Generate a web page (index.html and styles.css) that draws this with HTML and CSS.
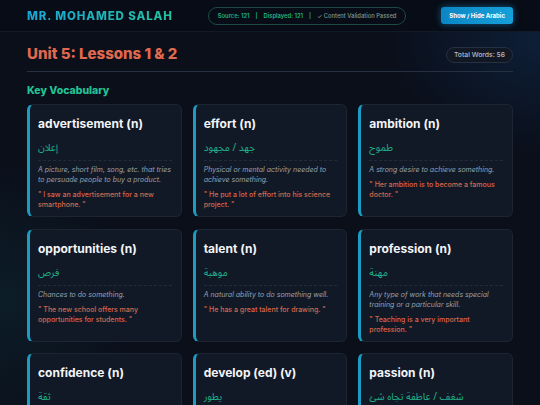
FILE: index.html
```html
<!DOCTYPE html>
<html lang="en">
<head>
<meta charset="utf-8">
<title>Unit 5 Vocabulary</title>
<link rel="stylesheet" href="styles.css">
</head>
<body>
<header class="topbar">
  <div class="brand">MR. MOHAMED SALAH</div>
  <div class="status">
    <span class="st-num">Source: 121</span>
    <span class="st-sep">|</span>
    <span class="st-num">Displayed: 121</span>
    <span class="st-sep">|</span>
    <span class="st-ok">✓ Content Validation Passed</span>
  </div>
  <button class="toggle">Show / Hide Arabic</button>
</header>
<main class="page">
  <div class="unit-head">
    <h1 class="unit-title">Unit 5: Lessons 1 &amp; 2</h1>
    <span class="count">Total Words: 56</span>
  </div>
  <h2 class="section">Key Vocabulary</h2>
  <div class="grid">
    <article class="card">
      <h3 class="word">advertisement (n)</h3>
      <p class="ar" dir="rtl">إعلان</p>
      <p class="def">A picture, short film, song, etc. that tries to persuade people to buy a product.</p>
      <p class="ex">" I saw an advertisement for a new smartphone. "</p>
    </article>
    <article class="card">
      <h3 class="word">effort (n)</h3>
      <p class="ar" dir="rtl">جهد / مجهود</p>
      <p class="def">Physical or mental activity needed to achieve something.</p>
      <p class="ex">" He put a lot of effort into his science project. "</p>
    </article>
    <article class="card">
      <h3 class="word">ambition (n)</h3>
      <p class="ar" dir="rtl">طموح</p>
      <p class="def">A strong desire to achieve something.</p>
      <p class="ex">" Her ambition is to become a famous doctor. "</p>
    </article>
    <article class="card">
      <h3 class="word">opportunities (n)</h3>
      <p class="ar" dir="rtl">فرص</p>
      <p class="def">Chances to do something.</p>
      <p class="ex">" The new school offers many opportunities for students. "</p>
    </article>
    <article class="card">
      <h3 class="word">talent (n)</h3>
      <p class="ar" dir="rtl">موهبة</p>
      <p class="def">A natural ability to do something well.</p>
      <p class="ex">" He has a great talent for drawing. "</p>
    </article>
    <article class="card">
      <h3 class="word">profession (n)</h3>
      <p class="ar" dir="rtl">مهنة</p>
      <p class="def">Any type of work that needs special training or a particular skill.</p>
      <p class="ex">" Teaching is a very important profession. "</p>
    </article>
    <article class="card">
      <h3 class="word">confidence (n)</h3>
      <p class="ar" dir="rtl">ثقة</p>
      <p class="def">The feeling that you can do things well.</p>
      <p class="ex">" She spoke with confidence. "</p>
    </article>
    <article class="card">
      <h3 class="word">develop (ed) (v)</h3>
      <p class="ar" dir="rtl">يطور</p>
      <p class="def">To grow or change into something bigger or better.</p>
      <p class="ex">" He developed his skills. "</p>
    </article>
    <article class="card">
      <h3 class="word">passion (n)</h3>
      <p class="ar" dir="rtl">شغف / عاطفة تجاه شئ</p>
      <p class="def">A very strong feeling of liking something.</p>
      <p class="ex">" She has a passion for music. "</p>
    </article>
  </div>
</main>
</body>
</html>
```

FILE: styles.css
```css
* { box-sizing: border-box; }
html, body { margin: 0; padding: 0; }
body {
  width: 540px;
  height: 405px;
  overflow: hidden;
  font-family: "Inter", "Noto Sans", "DejaVu Sans", sans-serif;
  color: #e8ecf2;
  background:
    radial-gradient(ellipse 220px 160px at 540px 40px, rgba(20, 60, 110, 0.35), transparent 70%),
    radial-gradient(ellipse 200px 200px at 0px 300px, rgba(20, 70, 80, 0.25), transparent 70%),
    #0a0f1a;
}
.topbar {
  height: 32px;
  padding: 0 27px;
  display: flex;
  align-items: center;
  justify-content: space-between;
  background: #070c16;
  border-bottom: 1px solid #121a26;
}
.brand {
  font-size: 11.5px;
  font-weight: 800;
  letter-spacing: 0.9px;
  background: linear-gradient(90deg, #1aa6d6, #22c4a0);
  -webkit-background-clip: text;
  background-clip: text;
  color: transparent;
}
.status {
  display: flex;
  align-items: center;
  gap: 6px;
  height: 18px;
  padding: 0 9px;
  border: 1px solid #1d4a43;
  border-radius: 9px;
  font-size: 5.8px;
  font-weight: 600;
  color: #22b384;
}
.st-sep { color: #22b384; }
.st-ok { color: #7f9a8f; font-weight: 500; }
.toggle {
  height: 17px;
  padding: 0 8px;
  border: none;
  border-radius: 3px;
  font-family: inherit;
  font-size: 6px;
  font-weight: 700;
  color: #ffffff;
  background: linear-gradient(90deg, #0b86c4, #169fd8);
  box-shadow: 0 0 7px rgba(30, 150, 220, 0.55);
}
.page { padding: 9px 27px 0 27px; }
.unit-head {
  display: flex;
  align-items: center;
  justify-content: space-between;
  height: 31px;
  border-bottom: 1px solid #263040;
}
.unit-title {
  margin: 0;
  font-size: 15px;
  font-weight: 800;
  color: #e0694f;
  position: relative;
  top: -3px;
}
.count {
  height: 16px;
  line-height: 14px;
  padding: 0 7px;
  border: 1px solid #263040;
  border-radius: 8px;
  background: #111823;
  font-size: 6.8px;
  font-weight: 500;
  color: #b7bfca;
  position: relative;
  top: -1px;
}
.section {
  margin: 12px 0 0 0;
  height: 14px;
  line-height: 14px;
  font-size: 10.5px;
  font-weight: 800;
  color: #22c397;
}
.grid {
  margin-top: 6px;
  display: grid;
  grid-template-columns: repeat(3, 1fr);
  column-gap: 11px;
  row-gap: 11.5px;
}
.card {
  height: 113px;
  padding: 11px 9px 9px 8px;
  background: #121926;
  border: 1px solid #1d2532;
  border-left: 3px solid #1c9cc2;
  border-radius: 6px;
}
.word {
  margin: 0;
  height: 16px;
  line-height: 16px;
  font-size: 12px;
  font-weight: 700;
  color: #f2f4f7;
}
.ar {
  margin: 9px 0 0 0;
  height: 14px;
  line-height: 14px;
  font-size: 10px;
  color: #1fb38b;
  text-align: left;
  font-family: "Noto Sans Arabic", "Noto Naskh Arabic", "DejaVu Sans", sans-serif;
}
.def {
  margin: 5px 0 0 0;
  padding-top: 4px;
  border-top: 1px dashed #222b38;
  line-height: 10px;
  font-size: 7px;
  font-style: italic;
  color: #98a1ad;
}
.ex {
  margin: 5px 0 0 0;
  line-height: 10px;
  font-size: 7px;
  font-weight: 500;
  color: #d8664d;
}
```
